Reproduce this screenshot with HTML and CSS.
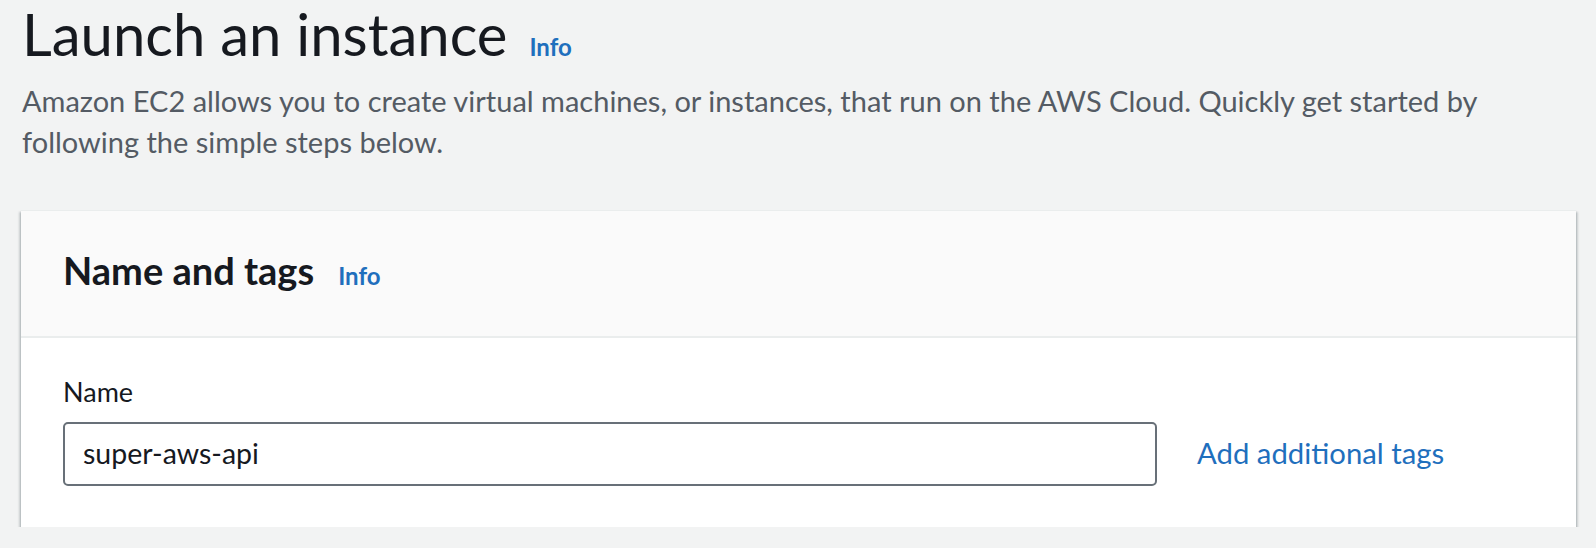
FILE: index.html
```html
<!DOCTYPE html>
<html lang="en">
<head>
<meta charset="utf-8">
<title>Launch an instance</title>
<link rel="stylesheet" href="styles.css">
</head>
<body>
<main class="page">
  <header class="page-header">
    <div class="title-row">
      <h1 class="title">Launch an instance</h1>
      <a class="info-link" href="#">Info</a>
    </div>
    <p class="description">Amazon EC2 allows you to create virtual machines, or instances, that run on the AWS Cloud. Quickly get started by following the simple steps below.</p>
  </header>

  <section class="card">
    <div class="card-header">
      <h2 class="card-title">Name and tags</h2>
      <a class="info-link" href="#">Info</a>
    </div>
    <div class="card-body">
      <label class="field-label" for="name">Name</label>
      <div class="field-row">
        <input class="text-input" id="name" type="text" value="super-aws-api">
        <a class="tags-link" href="#">Add additional tags</a>
      </div>
    </div>
  </section>
</main>
</body>
</html>
```

FILE: styles.css
```css
html, body {
  margin: 0;
  padding: 0;
  background: #f2f3f3;
}

body {
  font-family: "Lato", "Open Sans", sans-serif;
  color: #16191f;
}

.page {
  padding: 0 20px 0 22px;
}

.title-row {
  display: flex;
  align-items: baseline;
  gap: 22px;
}

.title {
  margin: 0;
  font-size: 58px;
  font-weight: 400;
  line-height: 68px;
  color: #16191f;
}

.info-link {
  font-size: 24px;
  font-weight: 700;
  color: #1f6fbd;
  text-decoration: none;
}

.description {
  margin: 12px 0 0;
  font-size: 29px;
  line-height: 41px;
  color: #545b64;
}

.card {
  margin-top: 48px;
  margin-left: -1px;
  background: #ffffff;
  border-top: 1px solid #eaeded;
  box-shadow: 0 2px 2px 0 rgba(0, 28, 36, 0.3), 2px 2px 2px 0 rgba(0, 28, 36, 0.15), -2px 2px 2px 0 rgba(0, 28, 36, 0.15);
}

.card-header {
  display: flex;
  align-items: baseline;
  gap: 24px;
  padding: 37px 42px 0;
  height: 88px;
  background: #fafafa;
  border-bottom: 2px solid #eaeded;
}

.card-title {
  margin: 0;
  font-size: 38px;
  font-weight: 700;
  line-height: 44px;
  color: #16191f;
}

.card-body {
  padding: 38px 42px 41px;
}

.field-label {
  display: block;
  font-size: 27px;
  line-height: 32px;
  color: #16191f;
}

.field-row {
  display: flex;
  align-items: center;
  gap: 40px;
  margin-top: 14px;
}

.text-input {
  box-sizing: border-box;
  width: 1094px;
  height: 64px;
  padding: 0 18px 2px;
  border: 2px solid #687078;
  border-radius: 5px;
  background: #ffffff;
  font-family: inherit;
  font-size: 28.5px;
  color: #16191f;
  outline: none;
}

.tags-link {
  font-size: 29.3px;
  color: #1f6fbd;
  text-decoration: none;
  margin-bottom: 4px;
}
```
